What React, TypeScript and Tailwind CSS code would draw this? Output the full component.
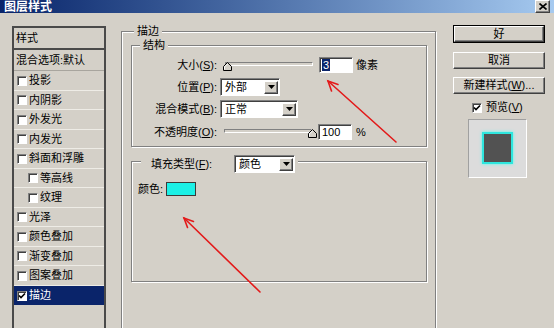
import React from 'react';

const raised =
    'border border-t-white border-l-white border-r-[#404040] border-b-[#404040] shadow-[inset_-1px_-1px_0_#808080]';
const sunken =
    'border border-t-[#808080] border-l-[#808080] border-r-white border-b-white shadow-[inset_1px_1px_0_#404040]';
const etched = 'border border-[#808080] shadow-[inset_1px_1px_0_#fff,1px_1px_0_#fff]';

function Check({ checked = false }: { checked?: boolean }) {
    return (
        <div className={`flex h-[10px] w-[10px] shrink-0 items-center justify-center bg-white ${sunken}`}>
            {checked && (
                <svg width="8" height="8" viewBox="0 0 8 8">
                    <path d="M1 3.5 L3 5.5 L7 1.5" stroke="#000" strokeWidth="1.6" fill="none" />
                </svg>
            )}
        </div>
    );
}

function Arrow() {
    return (
        <div className={`mr-[1px] flex h-[13px] w-[14px] items-center justify-center bg-[#d4d0c8] ${raised}`}>
            <svg width="7" height="4" viewBox="0 0 7 4">
                <path d="M0 0 H7 L3.5 4 Z" fill="#000" />
            </svg>
        </div>
    );
}

function Select({ text, width }: { text: string; width: string }) {
    return (
        <div className={`flex h-[18px] items-center bg-white ${width} ${sunken}`}>
            <span className="flex-1 pl-[4px]">{text}</span>
            <Arrow />
        </div>
    );
}

function Slider({ value }: { value: 'min' | 'max' }) {
    return (
        <div className="relative h-[10px] w-[94px]">
            <div className="mt-[3px] ml-[2px] h-[4px] w-[88px] border border-t-[#808080] border-l-[#808080] border-r-white border-b-white bg-[#d4d0c8]" />
            {/* thumb */}
            <svg
                className={`absolute top-[0px] ${value === 'min' ? 'left-[0px]' : 'left-[86px]'}`}
                width="9"
                height="9"
                viewBox="0 0 9 9"
            >
                <path d="M0.5 8.5 V4.5 L4.5 0.5 L8.5 4.5 V8.5 Z" fill="#d4d0c8" stroke="#000" strokeWidth="1" />
                <path d="M1.5 7.5 V4.9 L4.5 1.9" fill="none" stroke="#fff" strokeWidth="1" />
            </svg>
        </div>
    );
}

function Button({ label, isDefault = false }: { label: React.ReactNode; isDefault?: boolean }) {
    return (
        <div className={`h-full w-full ${isDefault ? 'border border-black' : ''}`}>
            <div className={`flex h-full w-full items-center justify-center bg-[#d4d0c8] ${raised}`}>{label}</div>
        </div>
    );
}

const layers: { name: string; indent?: boolean }[] = [
    { name: '投影' },
    { name: '内阴影' },
    { name: '外发光' },
    { name: '内发光' },
    { name: '斜面和浮雕' },
    { name: '等高线', indent: true },
    { name: '纹理', indent: true },
    { name: '光泽' },
    { name: '颜色叠加' },
    { name: '渐变叠加' },
    { name: '图案叠加' },
];

export default function App() {
    return (
        <div className="relative flex h-[328px] w-[554px] flex-col overflow-hidden bg-[#d4d0c8] font-['Liberation_Sans','Noto_Sans_CJK_SC',sans-serif] text-[11px] leading-none text-black">
            {/* top strip */}
            <div className="h-[2px] bg-[#e8e6e0]" />

            {/* title bar */}
            <div className="flex h-[18px] items-center bg-gradient-to-r from-[#0a246a] to-[#a6caf0] pl-[4px] pr-[4px]">
                <span className="flex-1 text-[12px] font-bold text-white">图层样式</span>
                <div className={`flex h-[13px] w-[15px] items-center justify-center bg-[#d4d0c8] ${raised}`}>
                    <svg width="8" height="7" viewBox="0 0 8 7">
                        <path d="M0.5 0.5 L7.5 6.5 M7.5 0.5 L0.5 6.5" stroke="#000" strokeWidth="1.6" />
                    </svg>
                </div>
            </div>

            <div className="flex flex-1 items-start">
                {/* style list */}
                <div className="mt-[13px] ml-[12px] h-[320px] w-[94px] shrink-0 border-2 border-[#4a4a4a]">
                    <div className="flex h-[22px] items-center border-b-2 border-[#4a4a4a] pl-[2px]">样式</div>
                    <div className="flex h-[21px] items-center border-b border-[#a8a59e] pl-[2px]">混合选项:默认</div>
                    {layers.map((l, i) => (
                        <div
                            key={l.name}
                            className={`flex items-center border-b border-[#eeece6] ${i % 2 === 0 ? 'h-[20px]' : 'h-[19px]'} ${l.indent ? 'pl-[14px]' : 'pl-[3px]'}`}
                        >
                            <Check />
                            <span className="ml-[2px]">{l.name}</span>
                        </div>
                    ))}
                    <div className="flex h-[19px] items-center bg-[#0a246a] pl-[3px] text-white">
                        <Check checked />
                        <span className="ml-[2px]">描边</span>
                    </div>
                </div>

                {/* stroke group */}
                <div className={`relative mt-[18px] ml-[15px] h-[300px] w-[315px] shrink-0 px-[9px] ${etched}`}>
                    <span className="absolute -top-[8px] left-[12px] bg-[#d4d0c8] px-[3px] leading-[14px]">描边</span>

                    {/* structure */}
                    <div className={`relative mt-[13px] h-[102px] w-[296px] ${etched}`}>
                        <span className="absolute -top-[8px] left-[8px] bg-[#d4d0c8] px-[3px] leading-[14px]">结构</span>

                        <div className="mt-[10px] flex h-[18px] items-center">
                            <span className="w-[85px] text-right">
                                大小(<u>S</u>):
                            </span>
                            <div className="ml-[6px]">
                                <Slider value="min" />
                            </div>
                            <div className={`ml-[2px] flex h-[16px] w-[34px] items-center bg-white pl-[2px] ${sunken}`}>
                                <span className="bg-[#0a246a] px-[1px] leading-[12px] text-white">3</span>
                            </div>
                            <span className="ml-[3px]">像素</span>
                        </div>

                        <div className="mt-[4px] flex h-[18px] items-center">
                            <span className="w-[85px] text-right">
                                位置(<u>P</u>):
                            </span>
                            <div className="ml-[3px]">
                                <Select text="外部" width="w-[60px]" />
                            </div>
                        </div>

                        <div className="mt-[4px] flex h-[18px] items-center">
                            <span className="w-[85px] text-right">
                                混合模式(<u>B</u>):
                            </span>
                            <div className="ml-[3px]">
                                <Select text="正常" width="w-[78px]" />
                            </div>
                        </div>

                        <div className="mt-[5px] flex h-[18px] items-center">
                            <span className="w-[85px] text-right">
                                不透明度(<u>O</u>):
                            </span>
                            <div className="ml-[5px]">
                                <Slider value="max" />
                            </div>
                            <div className={`ml-[2px] flex h-[16px] w-[34px] items-center bg-white pl-[3px] ${sunken}`}>
                                100
                            </div>
                            <span className="ml-[4px]">%</span>
                        </div>
                    </div>

                    {/* fill */}
                    <div className={`relative mt-[14px] h-[121px] w-[296px] ${etched}`}>
                        <div className="absolute -top-[7px] left-[9px] flex h-[18px] items-center bg-[#d4d0c8] pr-[3px]">
                            <span className="w-[93px] pl-[10px]">
                                填充类型(<u>F</u>):
                            </span>
                            <Select text="颜色" width="w-[61px]" />
                        </div>
                        <div className="mt-[20px] flex h-[14px] items-center pl-[6px]">
                            <span className="w-[28px]">颜色:</span>
                            <div className="h-[14px] w-[30px] border border-[#3a3a3a] bg-[#1cf0e6]" />
                        </div>
                    </div>
                </div>

                {/* right buttons */}
                <div className="mt-[12px] ml-[17px] flex w-[92px] shrink-0 flex-col">
                    <div className="h-[18px]">
                        <Button label="好" isDefault />
                    </div>
                    <div className="mt-[9px] h-[17px]">
                        <Button label="取消" />
                    </div>
                    <div className="mt-[8px] h-[17px]">
                        <Button
                            label={
                                <span>
                                    新建样式(<u>W</u>)...
                                </span>
                            }
                        />
                    </div>
                    <div className="mt-[7px] flex h-[13px] items-center pl-[19px]">
                        <Check checked />
                        <span className="ml-[4px]">
                            预览(<u>V</u>)
                        </span>
                    </div>
                    <div className="mt-[5px] ml-[15px] h-[59px] w-[59px] border border-t-[#a0a0a0] border-l-[#a0a0a0] border-r-white border-b-white bg-[#dcdcdc] pt-[12px] pl-[13px]">
                        <div className="h-[32px] w-[31px] border-2 border-[#2ee6de] bg-[#525252] shadow-[0_0_3px_#4ffff2]" />
                    </div>
                </div>
            </div>

            {/* red annotation arrows */}
            <svg
                className="pointer-events-none absolute inset-0"
                width="554"
                height="328"
                viewBox="0 0 554 328"
            >
                <g stroke="#e31a1a" strokeWidth="1.6" fill="none" strokeLinecap="round">
                    <path d="M396 142 L328 81" />
                    <path d="M338 84.5 L328 81 L331.5 91" />
                    <path d="M260 292 L184 218" />
                    <path d="M193.5 221.5 L184 218 L187.5 227.5" />
                </g>
            </svg>
        </div>
    );
}
